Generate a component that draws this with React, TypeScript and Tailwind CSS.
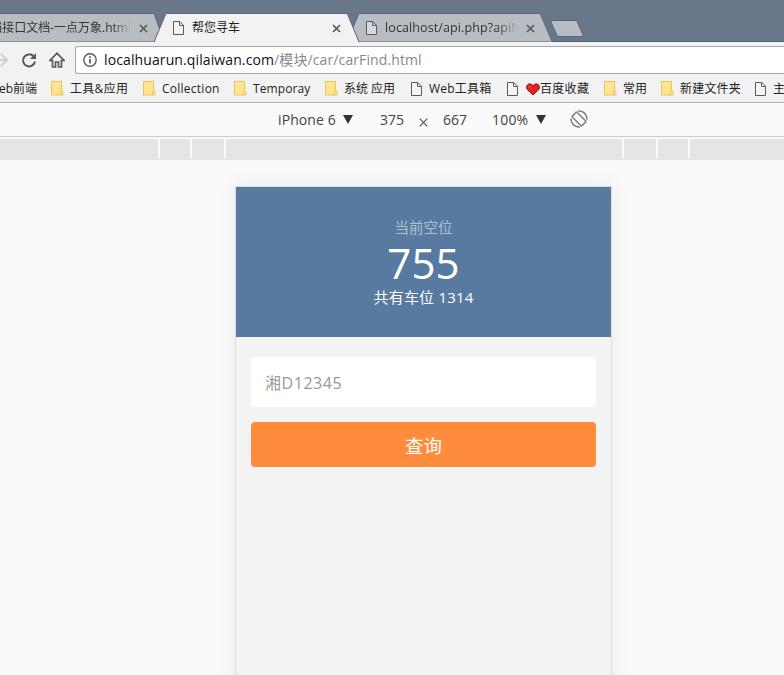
import React from 'react';

const PageIcon = ({ className = '' }: { className?: string }) => (
  <svg width="11" height="14" viewBox="0 0 11 14" className={'shrink-0 ' + className}>
    <path d="M.5.5h6.200l3.800 3.800v9.200H.5z" fill="#f4f4f4" fillOpacity=".5" stroke="#5a5a5a" />
    <path d="M6.500.5v4h4" fill="none" stroke="#5a5a5a" />
  </svg>
);

const FolderIcon = () => (
  <svg width="13" height="15" viewBox="0 0 13 15" className="shrink-0">
    <path d="M.5.5h10v9l1.500 1v3.500H.5z" fill="#ffe593" stroke="#eac54f" />
    <path d="M10.500 9.500L9.500 11v3" fill="none" stroke="#eac54f" />
  </svg>
);

const Close = () => (
  <svg width="9" height="9" viewBox="0 0 9 9" className="shrink-0">
    <path d="M1 1l7 7M8 1L1 8" stroke="#5a5a5a" strokeWidth="1.700" />
  </svg>
);

const Caret = () => (
  <svg width="10" height="9" viewBox="0 0 10 9" className="shrink-0">
    <path d="M0 0h10L5 9z" fill="#333" />
  </svg>
);

const Heart = () => (
  <svg width="14" height="13" viewBox="0 0 14 13" className="shrink-0">
    <path d="M7 12L1.500 6.800C-.5 4 1 .9 3.800.9 5.500.9 6.600 1.900 7 3 7.400 1.900 8.500.9 10.200.9c2.800 0 4.300 3.100 2.300 5.900z" fill="#ec1c24" stroke="#501010" strokeWidth=".9" />
    <path d="M3 4.500l1.500-1.500" stroke="#ff9a9a" />
  </svg>
);

type Mark = { label: string; kind: 'folder' | 'page'; width: string; heart?: boolean };

const marks: Mark[] = [
  { label: '工具&应用', kind: 'folder', width: 'w-[92px] tracking-[0.300px]' },
  { label: 'Collection', kind: 'folder', width: 'w-[91px] tracking-[0.250px]' },
  { label: 'Temporay', kind: 'folder', width: 'w-[91px] tracking-[0.100px]' },
  { label: '系统 应用', kind: 'folder', width: 'w-[85px]' },
  { label: 'Web工具箱', kind: 'page', width: 'w-[96px] tracking-[0.200px]' },
  { label: '百度收藏', kind: 'page', width: 'w-[98px] tracking-[0.300px]', heart: true },
  { label: '常用', kind: 'folder', width: 'w-[57px]' },
  { label: '新建文件夹', kind: 'folder', width: 'w-[93px] tracking-[0.200px]' },
  { label: '主页', kind: 'page', width: 'w-[60px]' },
];

const Gap = () => <div className="h-[19px] w-[2px] shrink-0 bg-[#fafafa]" />;

export default function App() {
  return (
    <div className="flex h-[675px] w-[784px] flex-col overflow-hidden bg-[#fafafa] font-['Open_Sans','Noto_Sans_CJK_SC',sans-serif] text-[#222]">
      {/* Tab strip */}
      <div className="relative h-[42px] shrink-0 bg-[#687789] pt-[14px]">
        <svg className="absolute left-0 top-0" width="784" height="42" viewBox="0 0 784 42">
          <path d="M0 41.500H784" stroke="#515d6e" />
          <path d="M-2 41.500V13.500H153q1 0 1.500 1L164 41.500z" fill="#b8bcc3" stroke="#596577" />
          <path d="M347 41.500L358.500 14.500q.5-1 1.500-1H539q1.200 0 1.700 1L552 41.500z" fill="#b8bcc3" stroke="#596577" />
          <path d="M0 41.500H154M358 41.500H552" stroke="#8d9299" />
          <path d="M154 42L165.500 14.500q.5-1 1.500-1H346q1.200 0 1.700 1L359 42z" fill="#f2f2f2" stroke="#596577" />
          <path d="M155 41.500H358" stroke="#f2f2f2" />
          <path d="M552 20.500H575q1.500 0 2 1L583 35q.3 1.500-1 1.500H559q-1.500 0-2-1L551 22q-.4-1.500 1-1.500z" fill="#b8bcc3" stroke="#596577" />
        </svg>
        <div className="relative flex h-[28px] items-center whitespace-nowrap text-[12px]">
          <div className="flex w-[173px] items-center">
            <div className="flex w-[131px] justify-end overflow-hidden text-[#333] [mask-image:linear-gradient(to_right,#000_86%,transparent)]">
              <span>档接口文档-一点万象.html</span>
            </div>
            <span className="ml-[8px]"><Close /></span>
          </div>
          <div className="flex w-[193px] items-center">
            <PageIcon />
            <span className="ml-[8px] w-[140px]">帮您寻车</span>
            <Close />
          </div>
          <PageIcon />
          <span className="ml-[8px] w-[133px] overflow-hidden text-[12.500px] tracking-[0.100px] text-[#333] [mask-image:linear-gradient(to_right,#000_84%,transparent)]">localhost/api.php?apiN</span>
          <span className="ml-[8px]"><Close /></span>
        </div>
      </div>

      {/* Address bar */}
      <div className="flex h-[35px] shrink-0 bg-[#f2f2f2] pt-[4px]">
        <svg width="75" height="28" viewBox="0 0 75 28" fill="none" className="shrink-0">
          <path d="M-6 14H7M1 8l6 6-6 6" stroke="#cfcfcf" strokeWidth="2" />
          <path d="M33.600 10.400A6 6 0 1 0 35 15.500" stroke="#5a5a5a" strokeWidth="2" />
          <path d="M36 7v6h-6z" fill="#5a5a5a" />
          <path d="M49.500 14.800L57 7.200l7.500 7.600M49 14.500h4.500M60.500 14.500H65M52.500 14v7h3v-5h3v5h3v-7" stroke="#5a5a5a" strokeWidth="1.700" />
        </svg>
        <div className="flex h-[28px] flex-1 items-center rounded-l-[3px] border border-r-0 border-[#a9a9a9] bg-white pl-[7px] whitespace-nowrap">
          <svg width="14" height="14" viewBox="0 0 14 14" className="shrink-0">
            <circle cx="7" cy="7" r="6.200" fill="none" stroke="#5a5a5a" strokeWidth="1.400" />
            <path d="M7 6v4.500M7 3.300v1.600" stroke="#5a5a5a" strokeWidth="1.700" />
          </svg>
          <span className="ml-[7px] -mt-px text-[14px] tracking-[0.110px] text-[#111]">localhuarun.qilaiwan.com<span className="text-[#888]">/模块/car/carFind.html</span></span>
        </div>
      </div>

      {/* Bookmarks */}
      <div className="flex h-[26px] shrink-0 items-center overflow-hidden border-b border-[#b5b5b5] bg-[#f2f2f2] pb-[1px] text-[12px] whitespace-nowrap">
        <span className="flex w-[37px] shrink-0 justify-end">Web前端</span>
        <div className="ml-[14px] flex">
          {marks.map((m) => (
            <div key={m.label} className={'flex shrink-0 items-center ' + m.width}>
              <span className="-mt-px flex">{m.kind === 'folder' ? <FolderIcon /> : <PageIcon className="ml-[1px] mr-[1px]" />}</span>
              <span className={'flex items-center ' + (m.heart ? 'ml-[7px]' : 'ml-[6px]')}>
                {m.heart && <Heart />}
                <span>{m.label}</span>
              </span>
            </div>
          ))}
        </div>
      </div>

      {/* Device toolbar */}
      <div className="flex h-[34px] shrink-0 items-center border-b border-[#ccc] pl-[278px] text-[14px] text-[#444] whitespace-nowrap">
        <span className="w-[65px] tracking-[0.100px]">iPhone 6</span>
        <Caret />
        <span className="ml-[27px] w-[39px]">375</span>
        <svg width="9" height="9" viewBox="0 0 9 9" className="mt-[5px] shrink-0">
          <path d="M.7.700l7.600 7.600M8.300.700L.7 8.300" stroke="#555" strokeWidth="1.200" />
        </svg>
        <span className="ml-[15px] w-[49px]">667</span>
        <span className="w-[44px] tracking-[0.200px]">100%</span>
        <Caret />
        <svg width="18" height="18" viewBox="0 0 18 18" fill="none" stroke="#808080" strokeWidth="1.600" className="-mt-px ml-[24px]">
          <rect x="5.600" y="2.200" width="6.800" height="13.600" rx="1" transform="rotate(-45 9 9)" />
          <path d="M8 1a8.100 8.100 0 0 1 9 8.500M10 17A8.100 8.100 0 0 1 1 8.500" />
        </svg>
      </div>

      {/* Width ruler */}
      <div className="mt-[2px] flex h-[21px] shrink-0 bg-[#e5e5e5]">
        <div className="w-[158px]" />
        <Gap />
        <div className="w-[30px]" />
        <Gap />
        <div className="w-[32px]" />
        <Gap />
        <div className="w-[396px]" />
        <Gap />
        <div className="w-[32px]" />
        <Gap />
        <div className="w-[30px]" />
        <Gap />
      </div>

      {/* Phone viewport */}
      <div className="ml-[235px] mt-[26px] h-[700px] w-[377px] shrink-0 border border-[#ddd] bg-[#f3f3f3] shadow-[0_0_20px_rgba(0,0,0,0.07)]">
        <div className="flex h-[150px] flex-col items-center bg-[#587aa1] pt-[31px] text-white">
          <div className="h-[21px] text-[14.500px] leading-[20px] text-[#afc0d3]">当前空位</div>
          <div className="h-[48px] text-[42px] leading-[48px] tracking-[0.200px]">755</div>
          <div className="h-[20px] text-[15px] leading-[20px] tracking-[0.200px]">共有车位 1314</div>
        </div>
        <div className="flex flex-col gap-[15px] px-[15px] pt-[20px]">
          <div className="flex h-[50px] items-center rounded-[4px] bg-white pl-[14px] pt-[2px] text-[16px] tracking-[0.550px] text-[#999]">湘D12345</div>
          <button className="h-[45px] rounded-[4px] bg-[#ff8b3d] pt-[2px] text-[18.500px] text-white">查询</button>
        </div>
      </div>
    </div>
  );
}
